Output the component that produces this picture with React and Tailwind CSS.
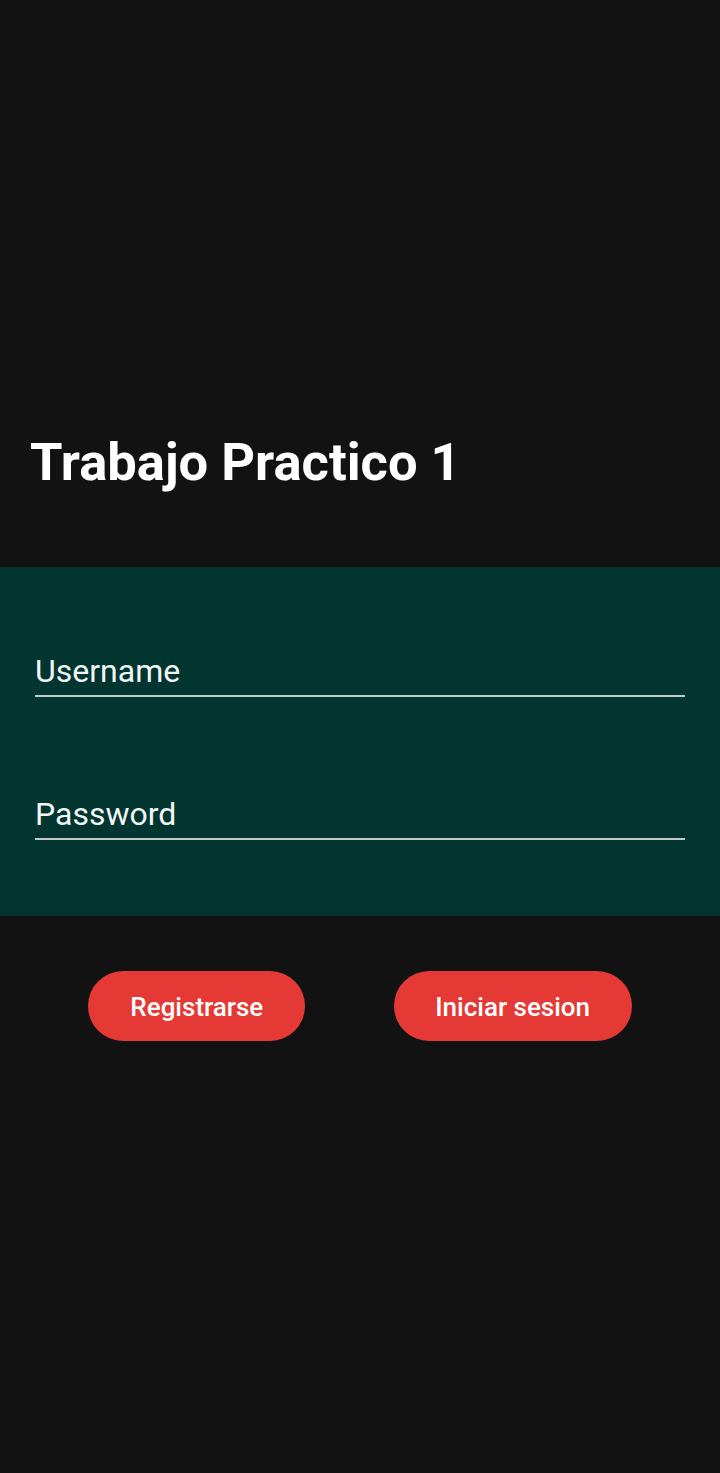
import React from "react";

const Field = ({ label, className = "" }) => (
    <div className={`border-b-2 border-[#c3cbca] pb-[5px] ${className}`}>
        <div className="text-[32px] leading-[38px] text-[#f2f6f5]">{label}</div>
    </div>
);

const PillButton = ({ children, width }) => (
    <button className={`h-[70px] ${width} rounded-full bg-[#e53935] text-white text-[26px] font-medium pt-[3px]`}>
        {children}
    </button>
);

const App = () => {
    return (
        <div className="min-h-[1473px] bg-[#121212] font-['Roboto',sans-serif]">
            <div className="h-[567px] flex flex-col justify-end pb-[75px] pl-[30px]">
                <h1 className="text-[52.5px] leading-[60px] font-bold text-white">Trabajo Practico 1</h1>
            </div>

            <div className="bg-[#023430] px-[35px] pt-[85px] pb-[76px]">
                <Field label="Username" />
                <Field label="Password" className="mt-[98px]" />
            </div>

            <div className="flex justify-evenly mt-[55px]">
                <PillButton width="w-[217px]">Registrarse</PillButton>
                <PillButton width="w-[238px]">Iniciar sesion</PillButton>
            </div>
        </div>
    );
};

export default App;
